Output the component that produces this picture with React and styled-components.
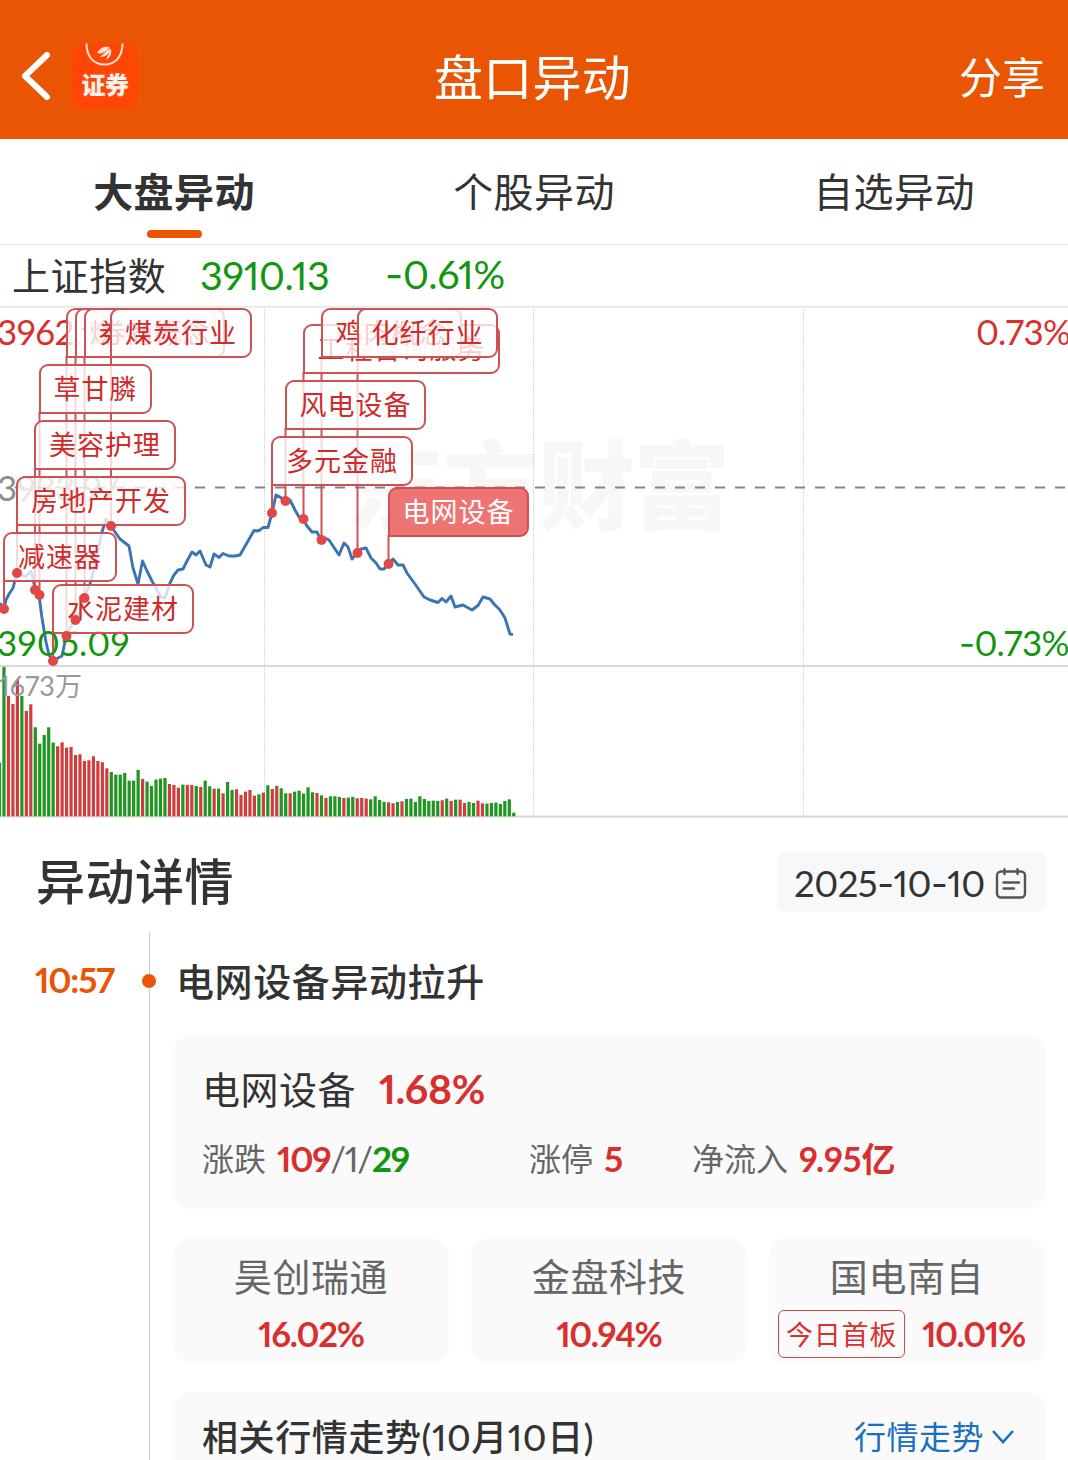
import React from "react";
import styled, { createGlobalStyle } from "styled-components";

const GlobalStyle = createGlobalStyle`
  * {
    box-sizing: border-box;
  }

  body {
    margin: 0;
    background: #fff;
    font-family: Lato, "Noto Sans CJK SC", sans-serif;
    font-variant-numeric: proportional-nums;
    color: #333;
  }
`;

const Page = styled.div`
  width: 1068px;
  height: 1460px;
  overflow: hidden;
  display: flex;
  flex-direction: column;
`;

const Text = styled.span`
  font-size: ${(p) => p.$size}px;
  font-weight: ${(p) => p.$weight || 400};
  letter-spacing: ${(p) => p.$spacing || 0}px;
  color: ${(p) => p.$color || "inherit"};
  line-height: 1;
  white-space: nowrap;
`;

const Dash = styled.span`
  font-family: Inter, sans-serif;
`;

const Header = styled.header`
  flex: none;
  height: 139px;
  padding: 15px 23px 0 20px;
  background: #ea5504;
  color: #fff;
  display: grid;
  grid-template-columns: 1fr auto 1fr;
  align-items: center;
`;

const HeaderLeft = styled.div`
  display: flex;
  align-items: center;
  gap: 20px;
  padding-bottom: 2px;
`;

const Share = styled.div`
  justify-self: end;
  display: flex;
`;

const Logo = styled.div`
  width: 66px;
  height: 66px;
  border-radius: 13px;
  background: #ff4605;
  display: flex;
  flex-direction: column;
  align-items: center;
  gap: 5px;
`;

const Tabs = styled.nav`
  flex: none;
  height: 106px;
  display: grid;
  grid-template-columns: 348px 372px 348px;
  border-bottom: 1px solid #e6e6e6;
`;

const Tab = styled.div`
  display: flex;
  flex-direction: column;
  align-items: center;
  padding-top: 33px;
  gap: 18px;

  &::after {
    content: "";
    width: 55px;
    height: 8px;
    border-radius: 4px;
    background: ${(p) => (p.$active ? "#ea5504" : "transparent")};
  }
`;

const IndexRow = styled.div`
  flex: none;
  height: 61px;
  padding: 0 0 1px 12px;
  display: flex;
  align-items: center;
`;

const IndexName = styled.div`
  width: 188px;
  display: flex;
`;

const IndexPrice = styled.div`
  width: 185px;
  display: flex;
`;

const Chart = styled.section`
  flex: none;
  position: relative;
  height: 512px;

  svg {
    display: block;
  }
`;

const AxisLabel = styled.div`
  position: absolute;
  display: flex;
  left: ${(p) => p.$left}px;
  top: ${(p) => p.$top}px;
`;

const Flag = styled.div`
  position: absolute;
  left: ${(p) => p.$x - 1}px;
  top: ${(p) => p.$y}px;
  height: 50px;
  padding: 0 12.5px 1px 13px;
  display: flex;
  align-items: center;
  border: 2px solid ${(p) => (p.$active ? "#d05050" : "#cb5353")};
  border-radius: 9px 9px 9px 0;
  background: ${(p) => (p.$active ? "#ee7373" : "rgba(255, 255, 255, 0.78)")};
  color: ${(p) => (p.$active ? "#fff" : "#cf2b2b")};
`;

const Dots = styled.svg`
  position: absolute;
  left: 0;
  top: 0;
`;

const DetailHead = styled.div`
  flex: none;
  height: 95px;
  padding: 0 22px 0 36px;
  display: flex;
  align-items: center;
  justify-content: space-between;
`;

const DateButton = styled.div`
  width: 269px;
  height: 60px;
  margin-top: 33px;
  padding: 4px 19px 0 17px;
  border-radius: 8px;
  background: #f7f8fa;
  display: flex;
  align-items: center;
  justify-content: space-between;
`;

const DetailTitle = styled.div`
  display: flex;
  padding-top: 31px;
`;

const Timeline = styled.div`
  flex: 1;
  margin-top: 19px;
  display: grid;
  grid-template-columns: 149px 1fr;
`;

const Time = styled.div`
  padding: 30px 0 0 35px;
  display: flex;
  align-items: flex-start;
`;

const Events = styled.div`
  border-left: 1px solid #ccc;
  padding: 0 22px 0 23px;
`;

const EventTitle = styled.div`
  height: 103px;
  padding-bottom: 6px;
  display: flex;
  align-items: center;

  &::before {
    content: "";
    width: 14px;
    height: 14px;
    margin: 0 20px 0 -31px;
    border-radius: 50%;
    background: #ea5504;
  }
`;

const Card = styled.div`
  height: ${(p) => p.$height}px;
  border-radius: 18px;
  background: #fafafa;
`;

const SectorName = styled.div`
  padding: 33px 0 0 29px;
  display: flex;
  align-items: center;
  gap: 23px;
`;

const SectorStats = styled.div`
  padding: 32px 0 0 29px;
  display: grid;
  grid-template-columns: 327px 163px 1fr;
`;

const Stat = styled.div`
  display: flex;
  align-items: center;
  gap: 11px;
`;

const Stocks = styled.div`
  margin: 29px 0;
  display: grid;
  grid-template-columns: repeat(3, 276px);
  gap: 22px;
`;

const Stock = styled(Card)`
  padding-top: 19px;
  display: flex;
  flex-direction: column;
  align-items: center;
  gap: 15px;
`;

const StockRow = styled.div`
  height: 48px;
  padding-right: ${(p) => (p.$tagged ? 11 : 0)}px;
  display: flex;
  align-items: center;
  gap: 17px;
`;

const Tag = styled.div`
  width: 127px;
  height: 48px;
  border: 1.5px solid #c94a4a;
  border-radius: 6px;
  display: flex;
  align-items: center;
  justify-content: center;
`;

const Trend = styled(Card)`
  padding: 0 31px 1px 29px;
  display: flex;
  align-items: center;
  justify-content: space-between;
`;

const TrendLink = styled.div`
  display: flex;
  align-items: center;
  gap: 7px;
`;

const RED = "#d8302f";
const GREEN = "#12960f";

const tabs = ["大盘异动", "个股异动", "自选异动"];

// x and y of the flag corner, y of the dot on the price line
const flags = [
  { x: 4, y: 226, dot: 303, name: "减速器" },
  { x: 17, y: 170, dot: 267, name: "房地产开发" },
  { x: 35, y: 114, dot: 284, name: "美容护理" },
  { x: 39.5, y: 58, dot: 289, name: "草甘膦" },
  { x: 53, y: 278, dot: 355, name: "水泥建材" },
  { x: 66.5, y: 2, dot: 330, name: "证券" },
  { x: 75.5, y: 2, dot: 314, name: "煤炭概念" },
  { x: 84.5, y: 2, dot: 292, name: "券商概念" },
  { x: 111, y: 2, dot: 220, name: "煤炭行业" },
  { x: 272, y: 130, dot: 207, name: "多元金融" },
  { x: 285.5, y: 74, dot: 195, name: "风电设备" },
  { x: 303.5, y: 18, dot: 213, name: "工程咨询服务" },
  { x: 321.5, y: 2, dot: 234, name: "鸡肉概念" },
  { x: 357.5, y: 2, dot: 247, name: "化纤行业" },
  { x: 388.5, y: 181, dot: 258, name: "电网设备", active: true },
];

const price =
  "0,597 4,603 6,594 9,588 13,582 17,567 20,565 23,570 26,570 31,565 33,572 35,583 39,589 42,612 46,636 49,649 53,655 58,652 62,650 66,631 70,622 75,614 80,606 84,592 90,578 95,559 98,544 102,526 106,513 111,520 115,526 120,533 129,540 133,562 138,578 142.5,555 147,565 152,575 157,584 161,591 165,592 170,577 174,569 178,564 183,563 187,555 192,546 196,549 200,545 206,559 210,561 214,548 219,551.5 223,547.5 229,550 235,550 240,549 254,524.5 257,525 260,524 263,521.5 268,521.5 272,507 276,489 280,491 285,495 290,494 295,504 299,511 303,513.5 307,520 312,526 317,526 321,534 325,532 329,534 335,543 339,549 344,537 348,541 352,553 357,547 361,543 366,542 371,552 376,557 380,563 384,563 388,558 393,553 398,559 403,559 407,567 415,578 424,591 430,594 438,596.5 442,592.5 446,596 451,590 455,601 463,599 472,604 478,599.5 483,591 490,593 494,598 500,604 505,612 510,628 513,628.5";

// one bar per minute: colour and height in thirds of a pixel
const volume =
  "g161 g448 r361 r337 r409 g361 r316 r336 g267 g218 g244 g267 g221 r210 r222 r206 r208 r184 r186 r166 r168 r180 r166 r162 r144 g133 g125 g125 g130 g107 g107 g139 r112 g104 g91 g110 g113 g115 r97 r94 r86 g95 r94 r94 g91 r88 g107 g90 r83 g83 r69 g103 g79 r81 r64 r74 r79 r62 g66 r71 g93 r82 r91 g84 g69 r69 g74 g77 g68 g87 g72 r70 g63 r55 g60 g60 g58 r55 g56 g58 r54 r55 r53 g51 g60 g49 g43 r42 r39 g43 r45 g52 g53 g43 g60 g52 g46 g47 g46 r48 g53 r46 g50 r50 r40 g43 g40 r47 r39 g38 g40 g41 g37 g46 g51 g11".split(
    " "
  );

const stocks = [
  { name: "昊创瑞通", change: "16.02%" },
  { name: "金盘科技", change: "10.94%" },
  { name: "国电南自", change: "10.01%", tag: "今日首板" },
];

const MarketChart = () => (
  <Chart>
    <svg width="1068" height="512" viewBox="0 0 1068 512">
      <text
        x="347"
        y="216"
        fontSize="97"
        fontWeight="900"
        fontFamily="Noto Sans CJK SC, sans-serif"
        letterSpacing="-1.5"
        fill="#f7f7f7"
      >
        东方财富
      </text>
      {[264.5, 533.5, 803.5].map((x) => (
        <path key={x} d={`M${x} 0V511`} stroke="#d8d8d8" strokeDasharray="2 1" />
      ))}
      <path d="M0 0.5H1068" stroke="#e6e6e6" strokeWidth="2" />
      <path d="M0 360H1068M0 510.5H1068" stroke="#d9d9d9" strokeWidth="2" />
      <path
        d="M15 181.5H1068"
        stroke="#858585"
        strokeWidth="2"
        strokeDasharray="10 10"
      />
      {volume.map((bar, i) => {
        const height = bar.slice(1) / 3;
        return (
          <rect
            key={i}
            x={-2.1 + i * 4.472}
            y={510.3 - height}
            width="3.2"
            height={height}
            fill={bar[0] === "g" ? "#1f961f" : "#cf3e3e"}
          />
        );
      })}
      <polyline
        points={price}
        transform="translate(0 -300)"
        fill="none"
        stroke="#3b74b3"
        strokeWidth="2.9"
        strokeLinejoin="round"
      />
      {flags.map((flag) => (
        <path
          key={flag.x}
          d={`M${flag.x} ${flag.y + 48}V${flag.dot}`}
          stroke="#cb5353"
          strokeWidth="2"
        />
      ))}
    </svg>
    <AxisLabel $left={-3} $top={8}>
      <Text $size={35} $color={RED} $spacing={-0.4}>3962.85</Text>
    </AxisLabel>
    <AxisLabel $left={-3} $top={164}>
      <Text $size={35} $color="#8f8f8f" $spacing={-0.4}>3933.97</Text>
    </AxisLabel>
    <AxisLabel $left={-3} $top={319}>
      <Text $size={35} $color={GREEN} $spacing={0.2}>3905.09</Text>
    </AxisLabel>
    <AxisLabel $left={976} $top={8}>
      <Text $size={35} $color={RED} $spacing={-0.6}>0.73%</Text>
    </AxisLabel>
    <AxisLabel $left={959} $top={319}>
      <Text $size={35} $color={GREEN} $spacing={-0.6}>
        <Dash>-</Dash>0.73%
      </Text>
    </AxisLabel>
    <AxisLabel $left={-1} $top={366}>
      <Text $size={27} $color="#999" $spacing={0.1}>1673万</Text>
    </AxisLabel>
    {flags.map((flag) => (
      <Flag key={flag.x} $x={flag.x} $y={flag.y} $active={flag.active}>
        <Text $size={27} $spacing={1}>{flag.name}</Text>
      </Flag>
    ))}
    <Dots width="1068" height="362">
      {flags.map((flag) => (
        <circle key={flag.x} cx={flag.x} cy={flag.dot} r="5" fill="#e04848" />
      ))}
    </Dots>
  </Chart>
);

const App = () => {
  return (
    <Page>
      <GlobalStyle />
      <Header>
        <HeaderLeft>
          <svg width="32" height="52" viewBox="0 0 32 52">
            <path
              d="M27 5L5 26L27 47"
              fill="none"
              stroke="#fff"
              strokeWidth="6"
              strokeLinecap="round"
              strokeLinejoin="round"
            />
          </svg>
          <Logo>
            <svg width="42" height="25" viewBox="0 0 42 25">
              <path
                d="M2.500 0.500C2.500 14 10 21.500 20.500 21.500S38.500 14 38.500 0.500"
                fill="none"
                stroke="#ffe4d8"
                strokeWidth="2"
              />
              <path
                d="M13 10C16 4.500 21 3 25.500 4C23 8.500 18 11.500 13 10ZM16 14C19 11 23 8 26 5C26 10 22 14.500 16 14ZM22 16.500C24 12 25.500 9 26.500 5.500C28.500 10 26 15.500 22 16.500Z"
                fill="#ffe4d8"
              />
            </svg>
            <Text $size={24} $weight={900} $spacing={-0.5} $color="#fff0e8">证券</Text>
          </Logo>
        </HeaderLeft>
        <Text $size={49} $spacing={0.3}>盘口异动</Text>
        <Share>
          <Text $size={43}>分享</Text>
        </Share>
      </Header>
      <Tabs>
        {tabs.map((name, i) => (
          <Tab key={name} $active={i === 0}>
            <Text $size={40} $weight={i === 0 ? 700 : 400} $spacing={0.4}>
              {name}
            </Text>
          </Tab>
        ))}
      </Tabs>
      <IndexRow>
        <IndexName>
          <Text $size={38} $spacing={0.6}>上证指数</Text>
        </IndexName>
        <IndexPrice>
          <Text $size={39.500} $color={GREEN} $spacing={-0.3}>3910.13</Text>
        </IndexPrice>
        <Text $size={39.500} $color={GREEN} $spacing={-0.3}>
          <Dash>-</Dash>0.61%
        </Text>
      </IndexRow>
      <MarketChart />
      <DetailHead>
        <DetailTitle>
          <Text $size={49} $weight={500} $spacing={0.5}>异动详情</Text>
        </DetailTitle>
        <DateButton>
          <Text $size={36.500} $spacing={-0.5}>
            2025<Dash>-</Dash>10<Dash>-</Dash>10
          </Text>
          <svg
            width="32"
            height="32"
            viewBox="0 0 32 32"
            fill="none"
            stroke="#555"
            strokeWidth="2.4"
            strokeLinecap="round"
          >
            <rect x="2" y="3.500" width="28" height="26" rx="4" />
            <path d="M9.500 1.200V6M22.500 1.200V6M8.500 14.500H24M8.500 20.500H19" />
          </svg>
        </DateButton>
      </DetailHead>
      <Timeline>
        <Time>
          <Text $size={35} $weight={700} $color="#ea5504" $spacing={-1.2}>10:57</Text>
        </Time>
        <Events>
          <EventTitle>
            <Text $size={38} $weight={500} $spacing={0.6}>电网设备异动拉升</Text>
          </EventTitle>
          <Card $height={174}>
            <SectorName>
              <Text $size={38} $spacing={0.5}>电网设备</Text>
              <Text $size={41} $weight={700} $color={RED} $spacing={-0.4}>1.68%</Text>
            </SectorName>
            <SectorStats>
              <Stat>
                <Text $size={32} $color="#666">涨跌</Text>
                <Text $size={35} $color="#666" $spacing={-1.3}>
                  <Text $size={35} $weight={700} $color={RED} $spacing={-1.3}>109</Text>
                  /1/
                  <Text $size={35} $weight={700} $color={GREEN} $spacing={-1.3}>29</Text>
                </Text>
              </Stat>
              <Stat>
                <Text $size={32} $color="#666">涨停</Text>
                <Text $size={35} $weight={700} $color={RED}>5</Text>
              </Stat>
              <Stat>
                <Text $size={32} $color="#666">净流入</Text>
                <Text $size={34} $weight={700} $color={RED} $spacing={0}>9.95亿</Text>
              </Stat>
            </SectorStats>
          </Card>
          <Stocks>
            {stocks.map((stock) => (
              <Stock key={stock.name} $height={125}>
                <Text $size={38} $color="#666" $spacing={0.6}>{stock.name}</Text>
                <StockRow $tagged={!!stock.tag}>
                  {stock.tag && (
                    <Tag>
                      <Text $size={27} $color={RED} $spacing={0.8}>{stock.tag}</Text>
                    </Tag>
                  )}
                  <Text $size={34.500} $weight={700} $color={RED} $spacing={-1.3}>
                    {stock.change}
                  </Text>
                </StockRow>
              </Stock>
            ))}
          </Stocks>
          <Trend $height={90}>
            <Text $size={36} $weight={500} $spacing={0.6}>相关行情走势(10月10日)</Text>
            <TrendLink>
              <Text $size={32} $color="#1a6fc0" $spacing={0.5}>行情走势</Text>
              <svg width="24" height="16" viewBox="0 0 24 16">
                <path
                  d="M2 2L12 13L22 2"
                  fill="none"
                  stroke="#1a6fc0"
                  strokeWidth="2.6"
                />
              </svg>
            </TrendLink>
          </Trend>
        </Events>
      </Timeline>
    </Page>
  );
};

export default App;
